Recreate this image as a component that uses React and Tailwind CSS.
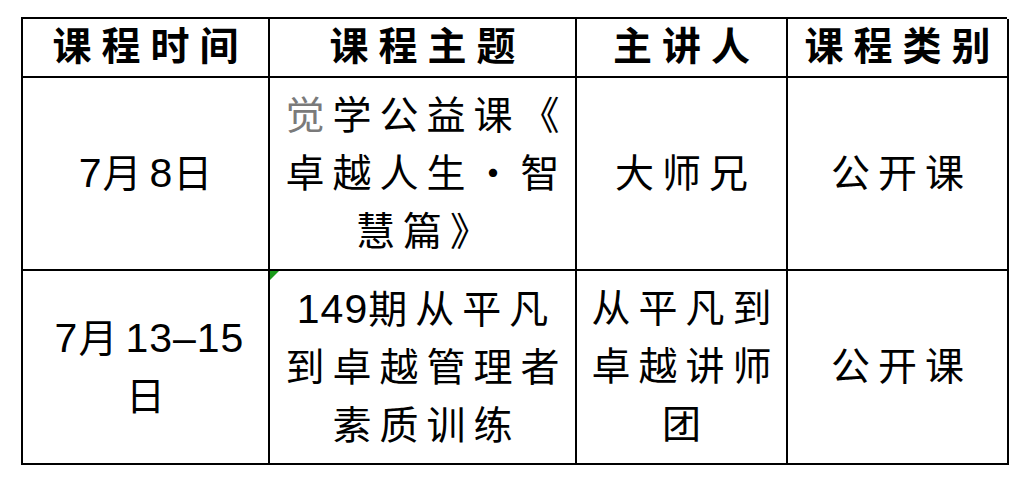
import React from 'react';

// digits and dashes sit tight, the CJK glyphs get wide spacing
const split = (line) =>
  typeof line !== 'string'
    ? line
    : line.split(/([0-9–]+)/).map((part, i) =>
        /^[0-9–]+$/.test(part) ? (
          <span key={i} className="text-[41px] tracking-[1px]">
            {part}
          </span>
        ) : (
          <span key={i}>{part}</span>
        )
      );

const rows = [
  {
    date: ['7月8日'],
    topic: [
      <><span className="text-[#7a7a7a]">觉</span>学公益课《</>,
      '卓越人生・智',
      '慧篇》',
    ],
    speaker: ['大师兄'],
    kind: ['公开课'],
  },
  {
    date: ['7月13–15', '日'],
    topic: ['149期从平凡', '到卓越管理者', '素质训练'],
    speaker: ['从平凡到', '卓越讲师', '团'],
    kind: ['公开课'],
    flag: true,
  },
];

const Cell = ({ lines, flag }) => (
  <div className="relative flex flex-col items-center justify-center border-r-2 border-b-2 border-black text-center">
    {flag && (
      <span className="absolute left-0 top-0 h-0 w-0 border-t-[9px] border-r-[9px] border-t-[#1a9a1a] border-r-transparent" />
    )}
    {lines.map((line, i) => (
      <div key={i} className="pl-[8px] leading-[58px] tracking-[8px] whitespace-nowrap">
        {split(line)}
      </div>
    ))}
  </div>
);

export default function App() {
  const headers = ['课程时间', '课程主题', '主讲人', '课程类别'];

  return (
    <div className="h-[487px] w-[1024px] bg-white pt-[17px] pl-[21px] font-['Liberation_Sans','Noto_Sans_CJK_SC',sans-serif] text-black">
      <div className="grid w-[986px] grid-cols-[247px_307px_211px_221px] grid-rows-[59px_193px_194px] border-t-2 border-l-2 border-black text-[39px]">
        {headers.map((h) => (
          <div
            key={h}
            className="flex items-center justify-center border-r-2 border-b-2 border-black pl-[10px] text-[39px] font-bold tracking-[10px]"
          >
            {h}
          </div>
        ))}
        {rows.map((r, i) => (
          <React.Fragment key={i}>
            <Cell lines={r.date} />
            <Cell lines={r.topic} flag={r.flag} />
            <Cell lines={r.speaker} />
            <Cell lines={r.kind} />
          </React.Fragment>
        ))}
      </div>
    </div>
  );
}
